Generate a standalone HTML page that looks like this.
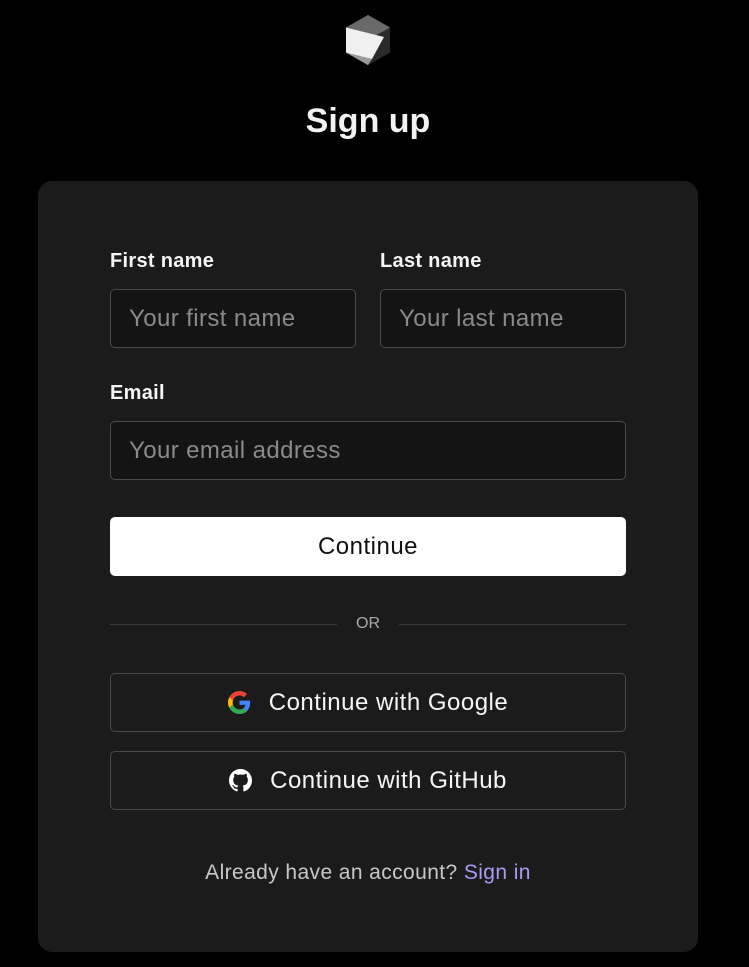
<!DOCTYPE html>
<html><head><meta charset="utf-8"><style>
*{box-sizing:border-box;margin:0;padding:0}
body{width:749px;height:967px;background:#000;font-family:"Liberation Sans",sans-serif;color:#fff;position:relative;overflow:hidden}
.abs{position:absolute}
h1{position:absolute;top:102px;left:0;width:736px;text-align:center;font-size:34px;font-weight:bold;color:#f2f2f2}
.card{left:38px;top:181px;width:660px;height:771px;background:#1b1b1b;border-radius:14px}
.lbl{font-size:20px;font-weight:bold;color:#f5f5f5;letter-spacing:0.3px}
.inp{height:59px;border:1px solid #4a4a4a;border-radius:5px;background:#141414;color:#8a8a8a;font-size:24px;letter-spacing:0.4px;padding-left:18px;line-height:57px}
.btn{left:110px;width:516px;height:59px;border-radius:5px;display:flex;align-items:center;justify-content:center;font-size:24px;letter-spacing:0.5px}
.ob{border:1px solid #4a4a4a;background:#1b1b1b;color:#f5f5f5}
.ob svg{margin-right:18px}
</style></head><body>
<svg class="abs" style="left:346px;top:15px" width="44" height="50" viewBox="0 0 44 50">
<polygon points="22,0 44,12.5 44,37.5 22,50 0,37.5 0,12.5" fill="#3a3a3a"/>
<polygon points="22,0 44,12.5 22,25 0,12.5" fill="#6a6a6a"/>
<polygon points="0,12.5 22,25 22,50 0,37.5" fill="#bdbdbd"/>
<polygon points="22,25 44,12.5 44,37.5 22,50" fill="#2a2a2a"/>
<polygon points="0,12.5 38,22 26,44 0,37.5" fill="#f0f0f0"/>
<polygon points="0,37.5 26,44 22,50" fill="#9a9a9a"/>
</svg>
<h1>Sign up</h1>
<div class="abs card"></div>
<div class="abs lbl" style="left:110px;top:250px">First name</div>
<div class="abs lbl" style="left:380px;top:250px">Last name</div>
<div class="abs inp" style="left:110px;top:289px;width:246px">Your first name</div>
<div class="abs inp" style="left:380px;top:289px;width:246px">Your last name</div>
<div class="abs lbl" style="left:110px;top:382px">Email</div>
<div class="abs inp" style="left:110px;top:421px;width:516px">Your email address</div>
<div class="abs btn" style="top:517px;background:#fff;color:#111">Continue</div>
<div class="abs" style="left:110px;top:624px;width:227px;height:1px;background:#3a3a3a"></div>
<div class="abs" style="left:399px;top:624px;width:227px;height:1px;background:#3a3a3a"></div>
<div class="abs" style="left:337px;top:615px;width:62px;text-align:center;font-size:16px;color:#aaa">OR</div>
<div class="abs btn ob" style="top:673px">
<svg width="23" height="23" viewBox="0 0 48 48"><path fill="#EA4335" d="M24 9.5c3.5 0 6.6 1.2 9.1 3.6l6.8-6.8C35.8 2.4 30.3 0 24 0 14.6 0 6.6 5.4 2.6 13.3l7.9 6.2C12.4 13.6 17.7 9.5 24 9.5z"/><path fill="#4285F4" d="M46.1 24.5c0-1.6-.1-3.1-.4-4.5H24v9h12.4c-.5 2.9-2.2 5.4-4.7 7.1l7.6 5.9c4.4-4.1 6.8-10.1 6.8-17.5z"/><path fill="#FBBC05" d="M10.5 28.6c-.5-1.4-.8-3-.8-4.6s.3-3.2.8-4.6l-7.9-6.2C.9 16.5 0 20.1 0 24s.9 7.5 2.6 10.8l7.9-6.2z"/><path fill="#34A853" d="M24 48c6.5 0 11.9-2.1 15.9-5.8l-7.6-5.9c-2.1 1.4-4.9 2.3-8.3 2.3-6.3 0-11.6-4.2-13.5-9.9l-7.9 6.2C6.6 42.6 14.6 48 24 48z"/></svg>Continue with Google</div>
<div class="abs btn ob" style="top:751px">
<svg width="23" height="23" viewBox="0 0 16 16"><path fill="#fff" d="M8 0C3.58 0 0 3.58 0 8c0 3.54 2.29 6.53 5.47 7.59.4.07.55-.17.55-.38 0-.19-.01-.82-.01-1.49-2.01.37-2.53-.49-2.69-.94-.09-.23-.48-.94-.82-1.13-.28-.15-.68-.52-.01-.53.63-.01 1.08.58 1.23.82.72 1.21 1.87.87 2.33.66.07-.52.28-.87.51-1.07-1.78-.2-3.64-.89-3.64-3.95 0-.87.31-1.59.82-2.15-.08-.2-.36-1.02.08-2.12 0 0 .67-.21 2.2.82.64-.18 1.32-.27 2-.27.68 0 1.36.09 2 .27 1.53-1.04 2.2-.82 2.2-.82.44 1.1.16 1.92.08 2.12.51.56.82 1.27.82 2.15 0 3.07-1.87 3.75-3.65 3.95.29.25.54.73.54 1.48 0 1.07-.01 1.93-.01 2.2 0 .21.15.46.55.38A8.013 8.013 0 0016 8c0-4.42-3.58-8-8-8z"/></svg>Continue with GitHub</div>
<div class="abs" style="left:0;top:861px;width:736px;text-align:center;font-size:21px;letter-spacing:0.4px;color:#c8c8c8">Already have an account? <span style="color:#a99cf5">Sign in</span></div>
</body></html>
